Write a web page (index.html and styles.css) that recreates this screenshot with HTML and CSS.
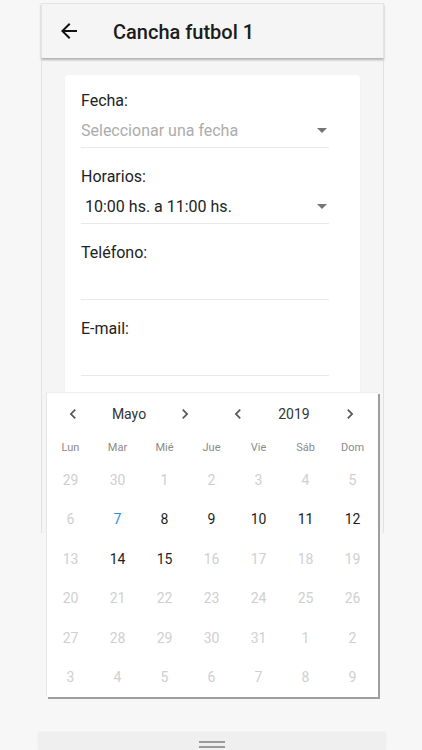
FILE: index.html
```html
<!DOCTYPE html>
<html lang="es">
<head>
  <meta charset="UTF-8">
  <meta name="viewport" content="width=device-width, initial-scale=1.0">
  <title>Cancha futbol 1</title>
  <link rel="stylesheet" href="styles.css">
</head>
<body>
  <div class="screen">
    <div class="app">
      <header class="topbar">
        <svg class="back" viewBox="0 0 24 24" width="24" height="24"><path d="M20 11H7.83l5.59-5.59L12 4l-8 8 8 8 1.41-1.41L7.83 13H20v-2z"/></svg>
        <h1>Cancha futbol 1</h1>
      </header>
      <main class="content">
        <div class="card">
          <div class="field">
            <label>Fecha:</label>
            <div class="value placeholder">Seleccionar una fecha
              <svg class="drop" viewBox="0 0 24 24" width="24" height="24"><path d="M7 10l5 5 5-5z"/></svg>
            </div>
          </div>
          <div class="field">
            <label>Horarios:</label>
            <div class="value selected">10:00 hs. a 11:00 hs.
              <svg class="drop" viewBox="0 0 24 24" width="24" height="24"><path d="M7 10l5 5 5-5z"/></svg>
            </div>
          </div>
          <div class="field">
            <label>Teléfono:</label>
            <div class="value"></div>
          </div>
          <div class="field">
            <label>E-mail:</label>
            <div class="value"></div>
          </div>
          <div class="field">
            <label>&nbsp;</label>
            <div class="value"></div>
          </div>
        </div>
      </main>
    </div>

    <div class="handle-bar">
      <span class="handle"></span>
    </div>

    <!-- date picker popup -->
    <div class="picker">
      <div class="picker-head">
        <div class="nav">
          <svg viewBox="0 0 24 24" width="20" height="20"><path d="M15.41 7.41L14 6l-6 6 6 6 1.41-1.41L10.83 12z"/></svg>
          <span>Mayo</span>
          <svg viewBox="0 0 24 24" width="20" height="20"><path d="M10 6L8.59 7.41 13.17 12l-4.58 4.59L10 18l6-6z"/></svg>
        </div>
        <div class="nav">
          <svg viewBox="0 0 24 24" width="20" height="20"><path d="M15.41 7.41L14 6l-6 6 6 6 1.41-1.41L10.83 12z"/></svg>
          <span>2019</span>
          <svg viewBox="0 0 24 24" width="20" height="20"><path d="M10 6L8.59 7.41 13.17 12l-4.58 4.59L10 18l6-6z"/></svg>
        </div>
      </div>
      <div class="weekdays">
        <span>Lun</span><span>Mar</span><span>Mié</span><span>Jue</span><span>Vie</span><span>Sáb</span><span>Dom</span>
      </div>
      <div class="days" id="days"></div>
    </div>
  </div>

  <script>
    // May 2019 grid, weeks start on Monday
    const days = document.getElementById('days');
    const cells = [29, 30];
    for (let d = 1; d <= 31; d++) cells.push(d);
    for (let d = 1; d <= 9; d++) cells.push(d);

    const enabled = [8, 9, 10, 11, 12, 14, 15];

    cells.forEach((n, i) => {
      const span = document.createElement('span');
      span.textContent = n;
      const inMonth = i >= 2 && i < 33;
      if (inMonth && n === 7) span.className = 'today';
      else if (inMonth && enabled.includes(n)) span.className = 'on';
      days.appendChild(span);
    });
  </script>
</body>
</html>
```

FILE: styles.css
```css
body {
  margin: 0;
  background: #f7f7f7;
  font-family: Roboto, "Noto Sans", sans-serif;
  color: #222;
}

.screen {
  position: relative;
  height: 750px;
  display: flex;
  flex-direction: column;
  overflow: hidden;
}

.app {
  margin: 3px 0 0 41px;
  width: 343px;
  display: flex;
  flex-direction: column;
}

.topbar {
  height: 55px;
  background: #f5f5f5;
  border: 1px solid #e4e4e4;
  border-bottom: none;
  box-shadow: 0 2px 2px rgba(0, 0, 0, 0.28);
  display: flex;
  align-items: center;
  box-sizing: border-box;
  position: relative;
  z-index: 1;
}

.back {
  margin-left: 15px;
  fill: #111;
}

.topbar h1 {
  margin: 1px 0 0 32px;
  font-size: 20px;
  font-weight: 500;
  color: #1c1c1c;
}

.content {
  background: #f5f5f5;
  border-left: 1px solid #e2e2e2;
  border-right: 1px solid #e2e2e2;
  padding: 15px 23px 0 23px;
  height: 458px;
  margin-top: 2px;
}

.card {
  background: #fff;
  border-radius: 4px;
  padding: 14px 31px 0 16px;
  height: 444px;
  box-shadow: 0 1px 2px rgba(0, 0, 0, 0.06);
}

.field {
  margin-bottom: 17px;
}

.field label {
  display: block;
  height: 24px;
  line-height: 24px;
  font-size: 16px;
  color: #222;
}

.field .value {
  height: 35px;
  border-bottom: 1px solid #e9e9e9;
  display: flex;
  align-items: center;
  justify-content: space-between;
  font-size: 16px;
  box-sizing: border-box;
}

.value.placeholder {
  color: #acacac;
}

.value.selected {
  color: #222;
  padding-left: 4px;
}

.drop {
  fill: #757575;
  margin-right: -5px;
}

.handle-bar {
  margin: auto 0 0 38px;
  width: 348px;
  height: 17px;
  background: #efefef;
  box-shadow: 0 -1px 2px rgba(0, 0, 0, 0.05);
  display: flex;
  justify-content: center;
  padding-top: 8px;
  box-sizing: border-box;
}

.handle {
  width: 26px;
  height: 7px;
  border-top: 2px solid #9a9a9a;
  border-bottom: 2px solid #9a9a9a;
  box-sizing: border-box;
}

/* date picker popup */
.picker {
  position: absolute;
  left: 46px;
  top: 392px;
  width: 332px;
  height: 305px;
  background: #fff;
  border-left: 1px solid #e6e6e6;
  border-top: 1px solid #eee;
  box-shadow: 2px 2px 0 #9e9e9e;
  box-sizing: border-box;
}

.picker-head {
  height: 41px;
  display: flex;
  gap: 33px;
  padding-left: 16px;
}

.nav {
  width: 132px;
  display: flex;
  align-items: center;
  justify-content: space-between;
  font-size: 14px;
  color: #333;
}

.nav svg {
  fill: #555;
}

.weekdays,
.days {
  display: grid;
  grid-template-columns: repeat(7, 47px);
}

.weekdays {
  height: 26px;
  align-items: center;
}

.weekdays span {
  text-align: center;
  font-size: 11px;
  color: #8a8a8a;
}

.days {
  grid-auto-rows: 39.5px;
}

.days span {
  display: flex;
  align-items: center;
  justify-content: center;
  font-size: 14px;
  color: #cfcfcf;
}

.days span.on {
  color: #1e1e1e;
}

.days span.today {
  color: #2f8ee0;
}
```
